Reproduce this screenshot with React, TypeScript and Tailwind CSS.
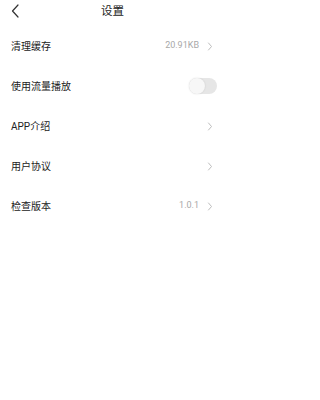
import React from "react";

const Chevron = () => (
  <svg width="6" height="9" viewBox="0 0 6 9" className="ml-[8px]">
    <path d="M1.5 1 L4.5 4.5 L1.5 8" fill="none" stroke="#b5b5b5" strokeWidth="0.9" strokeLinecap="round" strokeLinejoin="round" />
  </svg>
);

const Row = ({ label, children }: { label: string; children?: React.ReactNode }) => (
  <div className="flex h-[40px] items-center justify-between pl-[11px] pr-[12px]">
    <span className="text-[10px] text-[#222222]">{label}</span>
    <div className="flex items-center">{children}</div>
  </div>
);

export default function App() {
  return (
    <div
      className="w-[225px] h-[400px] bg-white"
      style={{ fontFamily: 'Roboto, "Noto Sans CJK SC", sans-serif' }}
    >
      <div className="relative flex h-[23px] items-center justify-center">
        <svg width="10" height="14" viewBox="0 0 10 14" className="absolute left-[10px] top-[4px]">
          <path d="M8 1 L2.5 7 L8 13" fill="none" stroke="#333" strokeWidth="1.2" strokeLinecap="round" strokeLinejoin="round" />
        </svg>
        <span className="text-[11.5px] text-[#222222]">设置</span>
      </div>
      <div className="mt-[3px]">
        <Row label="清理缓存">
          <span className="text-[9px] text-[#a8a8a8]">20.91KB</span>
          <Chevron />
        </Row>
        <Row label="使用流量播放">
          <div className="relative mr-[-4px] h-[16px] w-[28px] rounded-full bg-[#e6e6e6]">
            <div className="absolute left-0 top-0 h-[16px] w-[16px] rounded-full bg-[#f7f7f7] shadow-[0_0_2px_rgba(0,0,0,0.12)]" />
          </div>
        </Row>
        <Row label="APP介绍">
          <Chevron />
        </Row>
        <Row label="用户协议">
          <Chevron />
        </Row>
        <Row label="检查版本">
          <span className="text-[9px] text-[#a8a8a8]">1.0.1</span>
          <Chevron />
        </Row>
      </div>
    </div>
  );
}
